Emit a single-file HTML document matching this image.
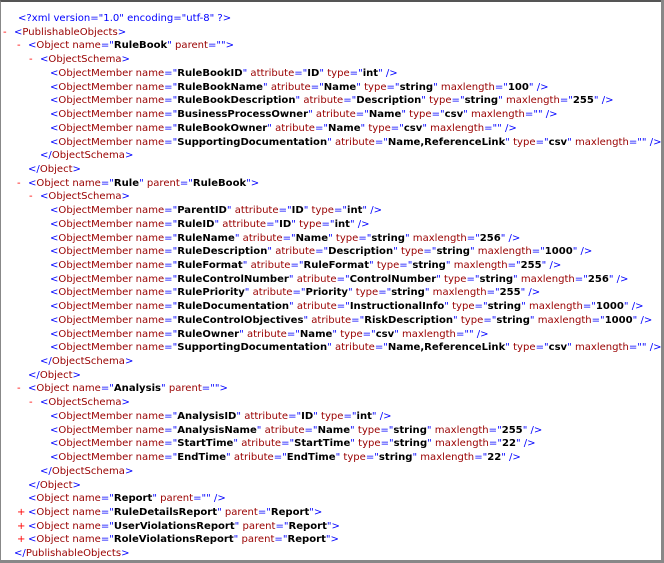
<!DOCTYPE html>
<html><head><style>
body{margin:0;width:664px;height:563px;background:#fff;position:relative;overflow:hidden;font-family:"DejaVu Sans","Liberation Sans",sans-serif;font-size:10.05px;}
.fr{position:absolute;left:0;top:0;width:661px;height:560px;border-top:2px solid #555;border-left:1px solid #888;box-sizing:border-box;}
.rb{position:absolute;right:0;top:0;width:3px;height:563px;background:#888;}
.bb{position:absolute;left:0;bottom:0;width:664px;height:3px;background:#888;}
.l{position:absolute;white-space:pre;line-height:13px;color:#00f;}
.t{color:#990000}.a{color:#990000}.v{color:#000;font-weight:bold}.m{color:#f00;position:absolute}
.p{color:#0000ff}
</style></head><body>
<div class="fr"></div><div class="rb"></div><div class="bb"></div>
<div id="c"></div>
<script>
var L=[
[18,'','<span class="p">&lt;?xml version="1.0" encoding="utf-8" ?&gt;</span>'],
[14,'-','&lt;<span class="t">PublishableObjects</span>&gt;'],
[28,'-','&lt;<span class="t">Object</span> <span class="a">name</span>="<span class="v">RuleBook</span>" <span class="a">parent</span>=""&gt;'],
[40,'-','&lt;<span class="t">ObjectSchema</span>&gt;'],
[50,'','M|RuleBookID|attribute|ID|type|int'],
[50,'','M|RuleBookName|atribute|Name|type|string|maxlength|100'],
[50,'','M|RuleBookDescription|atribute|Description|type|string|maxlength|255'],
[50,'','M|BusinessProcessOwner|atribute|Name|type|csv|maxlength|'],
[50,'','M|RuleBookOwner|atribute|Name|type|csv|maxlength|'],
[50,'','M|SupportingDocumentation|atribute|Name,ReferenceLink|type|csv|maxlength|'],
[40,'','&lt;/<span class="t">ObjectSchema</span>&gt;'],
[28,'','&lt;/<span class="t">Object</span>&gt;'],
[28,'-','&lt;<span class="t">Object</span> <span class="a">name</span>="<span class="v">Rule</span>" <span class="a">parent</span>="<span class="v">RuleBook</span>"&gt;'],
[40,'-','&lt;<span class="t">ObjectSchema</span>&gt;'],
[50,'','M|ParentID|attribute|ID|type|int'],
[50,'','M|RuleID|attribute|ID|type|int'],
[50,'','M|RuleName|atribute|Name|type|string|maxlength|256'],
[50,'','M|RuleDescription|atribute|Description|type|string|maxlength|1000'],
[50,'','M|RuleFormat|atribute|RuleFormat|type|string|maxlength|255'],
[50,'','M|RuleControlNumber|atribute|ControlNumber|type|string|maxlength|256'],
[50,'','M|RulePriority|atribute|Priority|type|string|maxlength|255'],
[50,'','M|RuleDocumentation|atribute|InstructionalInfo|type|string|maxlength|1000'],
[50,'','M|RuleControlObjectives|atribute|RiskDescription|type|string|maxlength|1000'],
[50,'','M|RuleOwner|atribute|Name|type|csv|maxlength|'],
[50,'','M|SupportingDocumentation|atribute|Name,ReferenceLink|type|csv|maxlength|'],
[40,'','&lt;/<span class="t">ObjectSchema</span>&gt;'],
[28,'','&lt;/<span class="t">Object</span>&gt;'],
[28,'-','&lt;<span class="t">Object</span> <span class="a">name</span>="<span class="v">Analysis</span>" <span class="a">parent</span>=""&gt;'],
[40,'-','&lt;<span class="t">ObjectSchema</span>&gt;'],
[50,'','M|AnalysisID|attribute|ID|type|int'],
[50,'','M|AnalysisName|atribute|Name|type|string|maxlength|255'],
[50,'','M|StartTime|atribute|StartTime|type|string|maxlength|22'],
[50,'','M|EndTime|atribute|EndTime|type|string|maxlength|22'],
[40,'','&lt;/<span class="t">ObjectSchema</span>&gt;'],
[28,'','&lt;/<span class="t">Object</span>&gt;'],
[28,'','&lt;<span class="t">Object</span> <span class="a">name</span>="<span class="v">Report</span>" <span class="a">parent</span>="" /&gt;'],
[28,'+','&lt;<span class="t">Object</span> <span class="a">name</span>="<span class="v">RuleDetailsReport</span>" <span class="a">parent</span>="<span class="v">Report</span>"&gt;'],
[28,'+','&lt;<span class="t">Object</span> <span class="a">name</span>="<span class="v">UserViolationsReport</span>" <span class="a">parent</span>="<span class="v">Report</span>"&gt;'],
[28,'+','&lt;<span class="t">Object</span> <span class="a">name</span>="<span class="v">RoleViolationsReport</span>" <span class="a">parent</span>="<span class="v">Report</span>"&gt;'],
[14,'','&lt;/<span class="t">PublishableObjects</span>&gt;']
];
var h='';
L.forEach(function(r,i){
 var y=12+i*13.72,s=r[2];
 if(s.indexOf('M|')==0){var p=s.split('|');s='&lt;<span class="t">ObjectMember</span> <span class="a">name</span>="<span class="v">'+p[1]+'</span>"';
  for(var k=2;k<p.length;k+=2)s+=' <span class="a">'+p[k]+'</span>="<span class="v">'+p[k+1]+'</span>"';s+=' /&gt;';}
 h+='<div class="l" style="top:'+y.toFixed(1)+'px;left:'+r[0]+'px">'+s+'</div>';
 if(r[1])h+='<div class="l m" style="top:'+y.toFixed(1)+'px;left:'+(r[0]-11)+'px;color:#f00">'+r[1]+'</div>';
});
document.getElementById('c').innerHTML=h;
</script>
</body></html>
